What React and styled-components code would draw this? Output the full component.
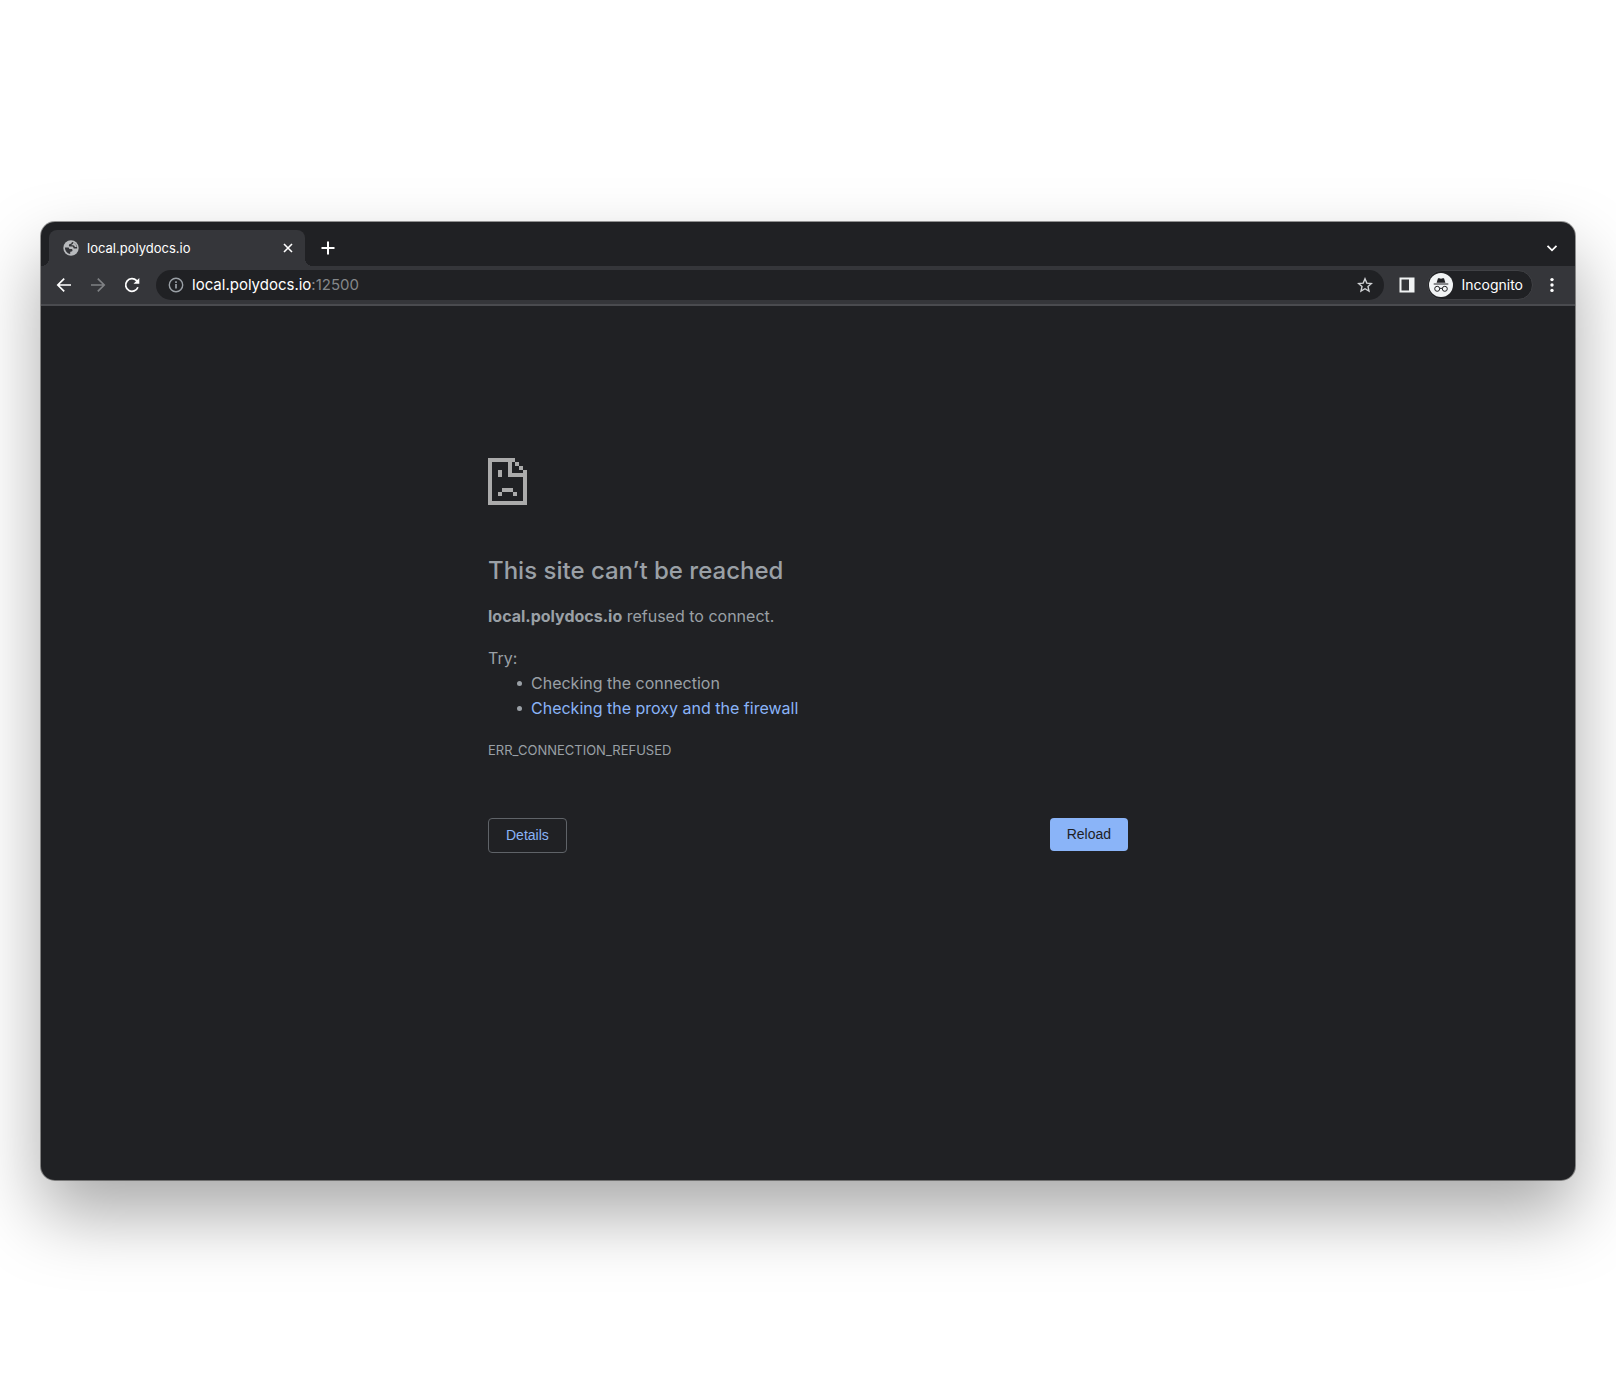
import React from "react";
import styled, { createGlobalStyle } from "styled-components";

const GlobalStyle = createGlobalStyle`
  *, *::before, *::after { box-sizing: border-box; }
  body {
    margin: 0;
    background: #fff;
    font-family: Inter, "Liberation Sans", sans-serif;
  }
  button { margin: 0; cursor: pointer; }
`;

const Desktop = styled.main`
  min-height: 100vh;
  padding: 222px 41px 220px;
`;

const Window = styled.section`
  display: flex;
  flex-direction: column;
  aspect-ratio: 1534 / 958;
  border-radius: 14px;
  overflow: hidden;
  background: #202124;
  color: #fff;
  box-shadow: 0 0 0 1px rgba(0, 0, 0, 0.4), 0 34px 70px rgba(0, 0, 0, 0.34);
`;

const TabStrip = styled.header`
  display: flex;
  align-items: stretch;
  height: 44px;
  padding: 8px 12px 0 8px;
`;

const Tab = styled.div`
  position: relative;
  display: flex;
  align-items: center;
  width: 256px;
  padding: 0 8px 0 14px;
  gap: 8px;
  border-radius: 8px 8px 0 0;
  background: #35363a;
  font-size: 13px;
  line-height: 16px;

  &::before,
  &::after {
    content: "";
    position: absolute;
    bottom: 0;
    width: 8px;
    height: 8px;
  }
  &::before {
    right: 100%;
    background: radial-gradient(circle at 0 0, #202124 8px, #35363a 8px);
  }
  &::after {
    left: 100%;
    background: radial-gradient(circle at 100% 0, #202124 8px, #35363a 8px);
  }
`;

const TabTitle = styled.span`
  flex: 1;
`;

const IconButton = styled.button`
  display: flex;
  align-items: center;
  justify-content: center;
  flex: none;
  width: ${(p) => p.$width || 28}px;
  height: 28px;
  padding: 0;
  border: 0;
  background: none;
  color: ${(p) => p.$color || "#fff"};
`;

const StripActions = styled.div`
  display: flex;
  flex: 1;
  align-items: center;
  justify-content: space-between;
  padding-left: 9px;
`;

const Toolbar = styled.nav`
  display: flex;
  align-items: center;
  height: 40px;
  padding: 0 9px 0 6px;
  background: #35363a;
  border-bottom: 2px solid #4a4b4f;
`;

const Omnibox = styled.form`
  display: flex;
  flex: 1;
  align-items: center;
  height: 30px;
  margin: 0 9px 0 7px;
  padding: 0 5px 0 12px;
  gap: 8px;
  border-radius: 15px;
  background: #202124;
  font-size: 15px;
  line-height: 20px;
`;

const Address = styled.a`
  flex: 1;
  color: #fff;
  text-decoration: none;
`;

const Port = styled.span`
  color: #85878a;
`;

const Profile = styled.button`
  display: flex;
  align-items: center;
  height: 30px;
  margin: 0 5px 0 6px;
  padding: 0 9px 0 1px;
  gap: 8px;
  border: 1px solid #404145;
  border-radius: 15px;
  background: #202124;
  color: #fff;
  font: 14px/20px Inter, "Liberation Sans", sans-serif;
`;

const ErrorPage = styled.article`
  width: 100%;
  max-width: 640px;
  margin: 0 auto;
  padding-top: 152px;
  color: #9aa0a6;
  font-size: 16px;
  line-height: 26px;

  > svg { display: block; }
`;

const Heading = styled.h1`
  margin: 50px 0 16px;
  font-size: 24px;
  font-weight: 500;
  line-height: 32px;
`;

const Paragraph = styled.p`
  margin: 0 0 16px;
`;

const Suggestions = styled.ul`
  margin: 0;
  padding: 0 0 0 29px;
  list-style: none;
  line-height: 25px;
`;

const Suggestion = styled.li`
  display: flex;
  align-items: center;
  gap: 9px;

  &::before {
    content: "";
    width: 5px;
    height: 5px;
    border-radius: 50%;
    background: #9aa0a6;
  }
  a {
    color: #8ab4f8;
    text-decoration: none;
  }
`;

const SuggestionsLabel = styled.p`
  margin: 0;
`;

const ErrorCode = styled.p`
  margin: 16px 0 0;
  font-size: 13px;
  line-height: 26px;
`;

const Actions = styled.div`
  display: flex;
  align-items: flex-start;
  justify-content: space-between;
  margin-top: 55px;
`;

const ActionButton = styled.button`
  padding: 8px 17px;
  border: ${(p) => (p.$primary ? "0" : "1px solid #5f6368")};
  border-radius: 4px;
  background: ${(p) => (p.$primary ? "#8ab4f8" : "transparent")};
  color: ${(p) => (p.$primary ? "#202124" : "#8ab4f8")};
  font: 14px/17px "Liberation Sans", Arial, sans-serif;
`;

const Glyph = ({ size = 16, children, ...rest }) => (
  <svg
    width={size}
    height={size}
    viewBox="0 0 16 16"
    fill="none"
    stroke="currentColor"
    strokeWidth="1.7"
    aria-hidden="true"
    {...rest}
  >
    {children}
  </svg>
);

const GlobeIcon = () => (
  <svg width="16" height="16" viewBox="0 0 16 16" aria-hidden="true">
    <circle cx="8" cy="8" r="7.7" fill="#b8babd" />
    <path
      fill="#35363a"
      d="M9.4 1.9C8.4 2.2 8.7 3.4 7.7 3.8c-.9.4-1.8.3-1.8 1.4 0 .9.2 1.2 1 1.2h2.2c.8 0 1.3.6 1.3 1.3 0 .6.4.8 1 .8h2.7c0-.2.1-.4.1-.6 0-2.6-1.9-5.2-4.8-6ZM1.9 7.4c0 3.2 2.2 5.9 5.3 6.6v-1.4c0-.6.3-1 .9-1 .9 0 1.4-.5 1.4-1.3 0-.7-.5-1.2-1.3-1.2H7.1c-.7 0-1-.4-1-.9 0-.6-.4-.8-1-.8Z"
    />
    <path
      fill="#b8babd"
      d="M10.2 2.6c.2.9-.3 1.6-1.2 1.8-.5.1-.6.4-.5.9h1.6c1 0 1.6.8 1.7 1.7h1.9c-.2-2-1.500-3.700-3.500-4.400Z"
    />
  </svg>
);

const SadPageIcon = () => (
  <svg width="39" height="47" viewBox="0 0 39 47" fill="#ababab" shapeRendering="crispEdges" aria-hidden="true">
    <path d="M0 0H4V47H0ZM4 0H27V4H4ZM4 43H39V47H4ZM35 12H39V43H35ZM20 4H24V19H20ZM24 15H35V19H24ZM27 4H31V8H27ZM31 8H35V12H31Z" />
    <path d="M10 12H14V19H10ZM14 30H25V34H14ZM10 34H14V38H10ZM25 34H29V38H25Z" />
  </svg>
);

const IncognitoIcon = () => (
  <svg width="24" height="24" viewBox="0 0 24 24" aria-hidden="true">
    <circle cx="12" cy="12" r="12" fill="#f1f3f4" />
    <path fill="#202124" d="M9 5.200h1.300l1.700.5 1.700-.5H15l1.400 4.500H7.600ZM4.700 10.500h14.600v1H4.700Z" />
    <g fill="none" stroke="#202124" strokeWidth="1">
      <circle cx="8.200" cy="15.800" r="2.500" />
      <circle cx="15.800" cy="15.800" r="2.500" />
      <path d="M10.700 15.600q1.300-.8 2.600 0" />
    </g>
  </svg>
);

export default function App() {
  return (
    <>
      <GlobalStyle />
      <Desktop>
        <Window>
          <TabStrip>
            <Tab>
              <GlobeIcon />
              <TabTitle>local.polydocs.io</TabTitle>
              <IconButton $width={18} aria-label="Close tab">
                <Glyph strokeWidth="1.6">
                  <path d="M4 4l8 8M12 4l-8 8" />
                </Glyph>
              </IconButton>
            </Tab>
            <StripActions>
              <IconButton aria-label="New tab">
                <Glyph strokeWidth="2">
                  <path d="M8 1.5v13M1.5 8h13" />
                </Glyph>
              </IconButton>
              <IconButton $width={22} aria-label="Search tabs">
                <Glyph strokeWidth="1.8">
                  <path d="M3.500 5.800L8 10.300l4.500-4.500" />
                </Glyph>
              </IconButton>
            </StripActions>
          </TabStrip>

          <Toolbar>
            <IconButton $width={34} aria-label="Back">
              <Glyph>
                <path d="M15 8H2M8.200 1.600L1.800 8l6.400 6.400" />
              </Glyph>
            </IconButton>
            <IconButton $width={34} $color="#7f8184" aria-label="Forward">
              <Glyph>
                <path d="M1 8h13M7.800 1.600L14.200 8l-6.400 6.400" />
              </Glyph>
            </IconButton>
            <IconButton $width={34} aria-label="Reload page">
              <Glyph>
                <path d="M13.900 10.200A6.300 6.300 0 1 1 12.600 3.700L14 5.200" />
                <path d="M15.300 1v5.800H9.500Z" fill="currentColor" stroke="none" />
              </Glyph>
            </IconButton>
            <Omnibox onSubmit={(e) => e.preventDefault()}>
              <Glyph stroke="#9aa0a6" strokeWidth="1.4">
                <circle cx="8" cy="8" r="6.700" />
                <path d="M8 7v4.600M8 4.200v1.700" strokeWidth="1.700" />
              </Glyph>
              <Address href="#address">
                local.polydocs.io<Port>:12500</Port>
              </Address>
              <IconButton type="button" $color="#d0d2d5" aria-label="Bookmark this tab">
                <Glyph strokeWidth="1.4">
                  <path d="M8 1.800l1.800 4.300 4.700.4-3.500 3.100 1 4.500L8 11.700l-4 2.400 1-4.500-3.500-3.100 4.700-.4Z" />
                </Glyph>
              </IconButton>
            </Omnibox>
            <IconButton aria-label="Side panel">
              <Glyph stroke="none">
                <path
                  fill="#f1f3f4"
                  fillRule="evenodd"
                  d="M.5.5h15v15H.5ZM2.500 2.500v11H10v-11Z"
                />
              </Glyph>
            </IconButton>
            <Profile aria-label="Incognito">
              <IncognitoIcon />
              Incognito
            </Profile>
            <IconButton aria-label="Menu">
              <Glyph fill="#fff" stroke="none">
                <circle cx="8" cy="2.600" r="1.700" />
                <circle cx="8" cy="8" r="1.700" />
                <circle cx="8" cy="13.400" r="1.700" />
              </Glyph>
            </IconButton>
          </Toolbar>

          <ErrorPage>
            <SadPageIcon />
            <Heading>This site can’t be reached</Heading>
            <Paragraph>
              <strong>local.polydocs.io</strong> refused to connect.
            </Paragraph>
            <SuggestionsLabel>Try:</SuggestionsLabel>
            <Suggestions>
              <Suggestion>Checking the connection</Suggestion>
              <Suggestion>
                <a href="#suggestions">Checking the proxy and the firewall</a>
              </Suggestion>
            </Suggestions>
            <ErrorCode>ERR_CONNECTION_REFUSED</ErrorCode>
            <Actions>
              <ActionButton>Details</ActionButton>
              <ActionButton $primary>Reload</ActionButton>
            </Actions>
          </ErrorPage>
        </Window>
      </Desktop>
    </>
  );
}
